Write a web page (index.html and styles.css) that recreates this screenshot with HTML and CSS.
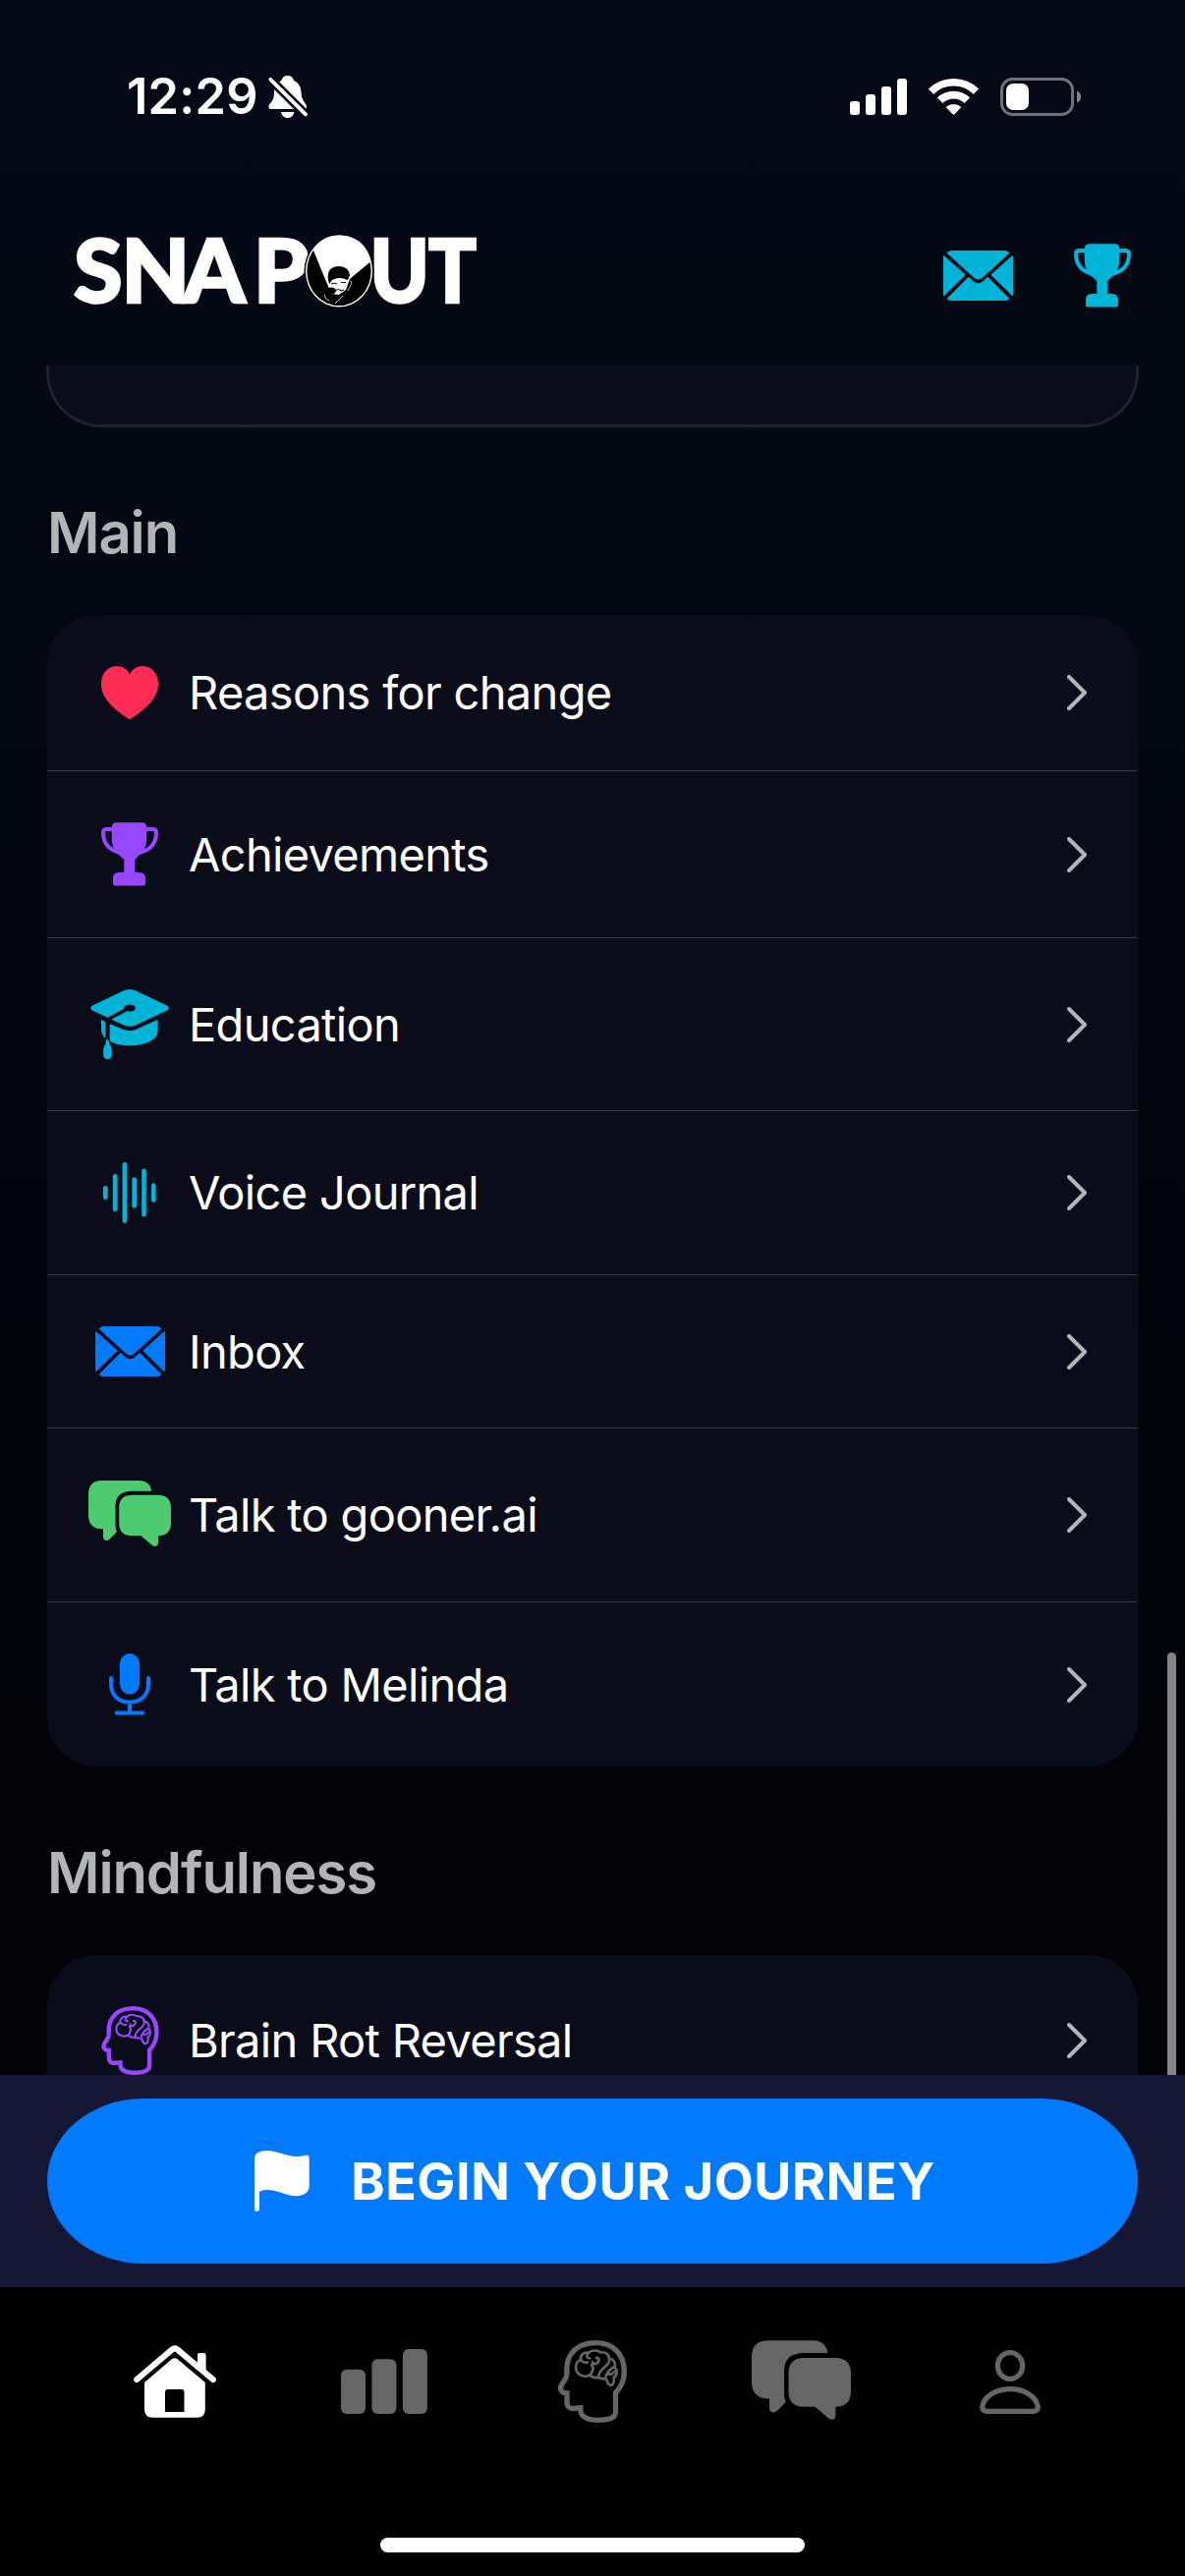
FILE: index.html
```html
<!DOCTYPE html>
<html lang="en">
<head>
<meta charset="utf-8">
<title>SnapOut</title>
<link rel="stylesheet" href="styles.css">
</head>
<body>
<svg class="sprite" aria-hidden="true">
  <symbol id="mail" viewBox="0 0 71 51">
    <path d="M3.5 2.5Q5.5 0 8 0H63Q65.500 0 67.500 2.500L40 27.500Q35.500 31.500 31 27.500ZM0 6Q0 4.500 1.500 5.800L22.700 24.700L1.500 45.500Q0 46.500 0 45ZM71 6Q71 4.500 69.500 5.800L48.300 24.700L69.500 45.500Q71 46.500 71 45ZM3.500 49L25.700 26.700L30.700 31.300Q35.500 35 40.300 31.300L45.300 26.700L67.500 49Q65.500 51 63 51H8Q5.500 51 3.500 49Z"/>
  </symbol>
  <symbol id="trophy" viewBox="0 0 58 65">
    <path d="M15.500 .3H41.500Q46.300 .5 46.300 5V15C46.300 29 40 32 34.300 38V51H39Q45 51.500 45 57V62Q45 64.500 43 64.500H14.500Q12 64.500 12 62V57Q12 51 18 51H23.300V38C17 32 10.700 29 10.700 15V5Q11 .5 15.500 .3Z"/>
    <path d="M12 7H5.500Q2 7 2 10.500C2 22 8 28.500 20 31M45 7H52.500Q56 7 56 10.500C56 22 50 28.500 38 31" fill="none" stroke="currentColor" stroke-width="4"/>
  </symbol>
  <symbol id="heart" viewBox="0 0 58 55">
    <path d="M29 54.500C12 43 0 33 0 18C0 7 7 0 16 0C22 0 27 3.500 29 8.500C31 3.500 36 0 42 0C51 0 58 7 58 18C58 33 46 43 29 54.500Z"/>
  </symbol>
  <symbol id="cap" viewBox="0 0 80 71">
    <path d="M34 1.300Q40 -1.200 46 1.300L78 16.500Q81.500 19 78 21.500L46 36.500Q40 39 34 36.500L2 21.500Q-1.500 19 2 16.500Z"/>
    <path class="cut" d="M39.500 19L17 31" fill="none" stroke-width="3.600"/>
    <ellipse class="cut-fill" cx="40" cy="19" rx="6" ry="3.500"/>
    <path d="M11 30.700L15.300 33V49.500Q11 46 11 41ZM19.600 35L34 41Q40 43 46 41L68.600 30.700V42C68.600 52 55 57.300 40 57.300C31 57.300 24 55.500 19.600 52.300ZM16 50L19.300 53V56Q21.800 58 21.800 61V67Q21.800 71 17.500 71Q13.200 71 13.200 67V61Q13.200 58 15.500 56Z"/>
  </symbol>
  <symbol id="wave" viewBox="0 0 54 62">
    <path d="M2.300 26.300V35.700M12.100 14.200V47.800M21.900 2.300V59.700M31.700 17.600V44.400M41.500 8.800V53.200M51.300 23.600V38.400" stroke="currentColor" stroke-width="4.600" stroke-linecap="round"/>
  </symbol>
  <symbol id="chat" viewBox="0 0 84 67">
    <path d="M13 0H52Q63 .5 64.300 10.700H43Q28 11.500 27.500 25V45Q27.500 50 29 52L21.500 59.800Q19 61.700 17 60.700Q15 60 15 57.500V49.300H13Q.5 48.500 0 36V13Q.5 .5 13 0Z"/>
    <path d="M43 14.700H72Q83.500 15.500 84 27V44Q83.500 55.500 72 56.200H71V64Q70.500 67 67.500 67Q66 66.700 65 66L53.600 56.200H43Q31.500 55.500 31.200 44V27Q31.500 15.500 43 14.700Z"/>
  </symbol>
  <symbol id="mic" viewBox="0 0 42 63">
    <rect x="11" y="0" width="20" height="41.500" rx="10"/>
    <path d="M2 25V31C2 43 10 49.500 21 49.500S40 43 40 31V25M21 50V60M7.700 60.500H34.300" fill="none" stroke="currentColor" stroke-width="4" stroke-linecap="round"/>
  </symbol>
  <symbol id="brain" viewBox="0 0 70 84">
    <g fill="none" stroke="currentColor" stroke-linejoin="round" stroke-linecap="round">
      <path stroke-width="5.300" stroke-linejoin="miter" d="M38.500 2.700C56 2.700 67.300 14 67.300 32C67.300 42 63 49 58.500 53.500V73C58.500 79 51 81.300 40.500 81.300C30 81.300 22.800 78 22.800 70.500V68.700L16 69.500C12 70 9 67.500 9 63V54C3.500 54 1.200 50 3.500 45.500C6 42 8.800 38 8.800 35V30C8.800 13 20 2.700 38.500 2.700Z"/>
      <path stroke-width="2.600" d="M23 20C22 15 27 11.500 31 13C34 9.500 41 10 43 12.500C48 11.500 52 14.500 52 18.500C57 19 59 24 57.500 27C61 31 60 36 56.500 38C57.500 42 56.500 46 53 45.700C50 45.500 50.500 41 48.500 39C45 40 43 38.500 41 38C37 38.500 34 37.500 32.500 35.500C25 39 18 34 18 27.500C18 23.500 20 21 23 20Z"/>
      <path stroke-width="2.600" d="M23 20C25 22.500 27 23.500 30 22.500M31 13C28 15.500 29 18 32 18.500M34 25C38 29 34 33 32.500 35.500M35 22C36 26 41 24 41.500 20C41.500 18 40 17.500 39 18M52 18.500C54 27 41 27 41 38M57.500 27C53 29 50 33 48.500 37M52 34.500C54 35 56 34 57 32"/>
    </g>
  </symbol>
  <symbol id="chevron" viewBox="0 0 20 36">
    <path d="M2 2L18 18L2 34" fill="none" stroke="currentColor" stroke-width="4" stroke-linecap="round" stroke-linejoin="round"/>
  </symbol>
</svg>

<div class="screen">
  <header class="top">
    <div class="status">
      <div class="status-left">
        <span class="time">12:29</span>
        <svg class="bell" viewBox="0 0 40 43">
          <path d="M19.700 0C23 0 25.500 2 26 5C31 7 33.500 12 33.500 17C34 24 36 26 38.500 29.500Q40.500 34 36 34H3.500Q-1 34 1 29.500C4 26 6 24 6 17C6 12 8.500 7 13.500 5C14 2 16.500 0 19.700 0ZM13 37H26.500Q25 43 19.700 43Q14.500 43 13 37Z"/>
          <path class="slash-gap" d="M0 1.500L40 41.500"/>
          <path class="slash" d="M2.300 3.800L38 39.300"/>
        </svg>
      </div>
      <div class="status-right">
        <svg class="signal" viewBox="0 0 58 37">
          <rect x="0" y="23" width="10" height="14" rx="3"/><rect x="16" y="16" width="10" height="21" rx="3"/><rect x="32" y="8" width="10" height="29" rx="3"/><rect x="48" y="0" width="10" height="37" rx="3"/>
        </svg>
        <svg class="wifi" viewBox="0 0 51 37">
          <path d="M2.500 13.200A32.700 32.700 0 0 1 48.500 13.200" fill="none" stroke="#fff" stroke-width="7.700"/>
          <path d="M11.700 22.300A19.700 19.700 0 0 1 39.300 22.300" fill="none" stroke="#fff" stroke-width="7.800"/>
          <path d="M17.700 29A11.500 11.500 0 0 1 33.300 29L26.500 36.300Q25.500 37.300 24.500 36.300Z"/>
        </svg>
        <svg class="battery" viewBox="0 0 82 39">
          <rect x="1.500" y="1.500" width="72" height="36" rx="11" fill="none" stroke="#6f717a" stroke-width="3"/>
          <rect x="6" y="6" width="23" height="27" rx="7"/>
          <path d="M78 13.500Q82 15 82 19.500T78 25.500Z" fill="#85868d"/>
        </svg>
      </div>
    </div>
    <div class="brandbar">
      <svg class="logo" viewBox="0 0 412 74">
        <text class="logo-text" y="69" x="0 48.500 111.500 183">SNAP</text>
        <text class="logo-text" y="69" x="335 401" transform="scale(.9 1)">UT</text>
        <ellipse cx="270" cy="37" rx="35.500" ry="38" fill="#050814"/>
        <ellipse cx="270" cy="37" rx="34" ry="36.500" fill="#fff"/>
        <ellipse cx="270" cy="37" rx="32.600" ry="35.100" fill="#000"/>
        <path d="M244 16L258 50L262 60L270 61L277 56L281 45L302.500 27C299 10 287 .5 270 .5C258 .5 249 6 244 16Z" fill="#fff"/>
        <path d="M259 46Q257 33 269 32Q280 32 281 41L279 46Q270 42 263 46L260 50Z" fill="#000"/>
        <ellipse cx="262" cy="57" rx="5" ry="3.500" fill="#000"/>
        <path d="M262 50Q265 48.500 268 50M272 48.500H277M266 57Q270 54 272 57L275 56" fill="none" stroke="#111" stroke-width="1.200"/>
        <path d="M255 61Q256 66 260 67M266 70L274 62M281 47Q284 47 282 51L279 57" fill="none" stroke="#bbb" stroke-width="1"/>
      </svg>
      <div class="actions">
        <svg class="i-mail cyan"><use href="#mail"/></svg>
        <svg class="i-trophy cyan"><use href="#trophy"/></svg>
      </div>
    </div>
  </header>

  <main class="scroll">
    <div class="panel-end"></div>
    <h2 class="heading first">Main</h2>
    <div class="card">
      <div class="row h158"><span class="slot"><svg class="i-heart red"><use href="#heart"/></svg></span><span class="label">Reasons for change</span><svg class="chev"><use href="#chevron"/></svg></div>
      <div class="row h169"><span class="slot"><svg class="i-trophy purple"><use href="#trophy"/></svg></span><span class="label">Achievements</span><svg class="chev"><use href="#chevron"/></svg></div>
      <div class="row h175"><span class="slot"><svg class="i-cap cyan"><use href="#cap"/></svg></span><span class="label">Education</span><svg class="chev"><use href="#chevron"/></svg></div>
      <div class="row h166"><span class="slot"><svg class="i-wave cyan"><use href="#wave"/></svg></span><span class="label">Voice Journal</span><svg class="chev"><use href="#chevron"/></svg></div>
      <div class="row h155"><span class="slot"><svg class="i-mail blue"><use href="#mail"/></svg></span><span class="label">Inbox</span><svg class="chev"><use href="#chevron"/></svg></div>
      <div class="row h176"><span class="slot"><svg class="i-chat green"><use href="#chat"/></svg></span><span class="label">Talk to gooner.ai</span><svg class="chev"><use href="#chevron"/></svg></div>
      <div class="row h167"><span class="slot"><svg class="i-mic blue"><use href="#mic"/></svg></span><span class="label">Talk to Melinda</span><svg class="chev"><use href="#chevron"/></svg></div>
    </div>
    <h2 class="heading">Mindfulness</h2>
    <div class="card">
      <div class="row h174"><span class="slot"><svg class="i-brain purple"><use href="#brain"/></svg></span><span class="label">Brain Rot Reversal</span><svg class="chev"><use href="#chevron"/></svg></div>
    </div>
    <div class="scrollbar"></div>
  </main>

  <div class="cta-bar">
    <button class="cta">
      <svg class="flag" viewBox="0 0 56 62"><path d="M0 7Q1 .3 12 0C24 0 32 6 43 6C48 6 50.500 5 53 4.500Q55.700 4.500 55.700 8V38Q54 45 44 46.200C32 46.500 24 40 13 40Q7 40 5 42V60Q4 62 2.500 62Q0 62 0 60Z"/></svg>
      <span class="cta-text">BEGIN YOUR JOURNEY</span>
    </button>
  </div>

  <nav class="tabs">
    <div class="tab-row">
      <span class="tab active"><svg class="t-home" viewBox="0 0 84 74"><path d="M65 22V10Q65 8 67 8H71.500Q73.600 8 73.600 10V28Z"/><path d="M3.200 35L39.500 4.200Q41.800 2.500 44.200 4.200L80.800 35" fill="none" stroke="currentColor" stroke-width="6.200" stroke-linecap="round"/><path fill-rule="evenodd" d="M38.500 14.500Q41.800 12 45 14.500L72.800 38V66Q72.500 73.500 65 73.800H19Q11.500 73.500 11 66V38ZM34.500 45Q32 45 32 47.500V68H51.500V47.500Q51.500 45 49 45Z"/></svg></span>
      <span class="tab"><svg class="t-bars" viewBox="0 0 88 66"><rect y="20.700" width="25" height="45.300" rx="6"/><rect x="31.400" y="10.300" width="25" height="55.700" rx="6"/><rect x="62.900" width="25" height="66" rx="6"/></svg></span>
      <span class="tab"><svg class="t-brain"><use href="#brain"/></svg></span>
      <span class="tab"><svg class="t-chat"><use href="#chat"/></svg></span>
      <span class="tab"><svg class="t-person" viewBox="0 0 62 65"><g fill="none" stroke="currentColor" stroke-width="5.200"><ellipse cx="31" cy="16" rx="12.700" ry="13.500"/><path d="M7.500 62.300Q2.700 62 2.700 58C4 47 17 39.700 31 39.700S58 47 59.300 58Q59.300 62 54.500 62.300Z"/></g></svg></span>
    </div>
    <div class="home-indicator"></div>
  </nav>
</div>
</body>
</html>
```

FILE: styles.css
```css
* { box-sizing: border-box; }
body { margin: 0; background: #000; font-family: Inter, "Liberation Sans", sans-serif; color: #fff; }
svg { display: block; fill: currentColor; flex: none; overflow: visible; }
.sprite { position: absolute; width: 0; height: 0; overflow: hidden; }

.screen {
  width: 1206px;
  height: 2622px;
  display: flex;
  flex-direction: column;
  overflow: hidden;
  background: linear-gradient(180deg, #050916 0, #040812 500px, #03060e 1100px, #030409 1700px, #030306 2112px);
}

.top { height: 372px; }
.status { display: flex; justify-content: space-between; align-items: center; height: 196px; padding: 0 106px 0 129px; }
.status-left { display: flex; align-items: center; gap: 12px; }
.time { font-size: 50.5px; line-height: 60px; font-weight: 600; width: 132px; letter-spacing: 0.2px; white-space: nowrap; }
.bell { width: 40px; height: 43px; }
.slash-gap { fill: none; stroke: #050814; stroke-width: 9px; }
.slash { fill: none; stroke: #fff; stroke-width: 3.8px; stroke-linecap: round; }
.status-right { display: flex; align-items: center; gap: 22px; }
.signal { width: 58px; height: 37px; }
.wifi { width: 51px; height: 37px; }
.battery { width: 82px; height: 39px; }

.brandbar { display: flex; justify-content: space-between; align-items: center; height: 160px; padding: 0 55px 0 75px; }
.logo { width: 412px; height: 74px; }
.logo-text { font-family: Lato, sans-serif; font-weight: 900; font-size: 90px; stroke: #fff; stroke-width: 2.6px; }
.actions { display: flex; align-items: center; gap: 62px; padding-top: 8px; }

.i-mail { width: 71px; height: 51px; }
.i-trophy { width: 58px; height: 65px; }
.i-heart { width: 58px; height: 55px; }
.i-cap { width: 80px; height: 71px; }
.i-wave { width: 54px; height: 62px; }
.i-chat { width: 84px; height: 67px; margin-top: -3px; }
.i-mic { width: 42px; height: 63px; }
.i-brain { width: 59px; height: 70px; }
.cyan { color: #00b4d8; }
.blue { color: #007aff; }
.red { color: #ff2d55; }
.purple { color: #9747ff; }
.green { color: #4ecb71; }
.cut { stroke: #0a0b19; stroke-linecap: round; }
.cut-fill { fill: #0a0b19; }

.scroll { position: relative; height: 1740px; overflow: hidden; padding: 0 48px; }
.panel-end { height: 63px; margin: 0 -1px; border: 3px solid #20212d; border-top: 0; border-radius: 0 0 56px 56px; background: #0a0b1b; }
.heading { margin: 72px 0 48px; padding-left: 0; font-size: 58px; line-height: 72px; font-weight: 600; color: #b3b4b7; letter-spacing: -1.1px; }
.heading.first { margin-top: 71px; }
.card { border-radius: 50px; background: #0a0c19; overflow: hidden; }
.row { display: flex; align-items: center; padding: 0 52px 0 42px; box-sizing: content-box; }
.row + .row { border-top: 1px solid #373944; }
.h155 { height: 155px; }
.h158 { height: 158px; }
.h166 { height: 166px; }
.h167 { height: 167px; }
.h169 { height: 169px; }
.h174 { height: 174px; }
.h175 { height: 175px; }
.h176 { height: 176px; }
.slot { display: flex; justify-content: center; width: 84px; }
.label { flex: 1; margin-left: 18px; font-size: 47px; line-height: 60px; font-weight: 400; letter-spacing: -0.68px; white-space: nowrap; }
.chev { width: 20px; height: 36px; color: #b4b5ba; }
.scrollbar { position: absolute; left: 1188px; top: 1310px; width: 9px; height: 460px; border-radius: 5px; background: #858587; }

.cta-bar { height: 216px; padding: 24px 48px; background: #151735; }
.cta { display: flex; align-items: center; justify-content: center; gap: 42px; width: 100%; height: 168px; border: 0; border-radius: 98px / 84px; background: #007aff; color: #fff; font-family: inherit; padding: 0 0 0 5px; }
.flag { width: 56px; height: 62px; }
.cta-text { font-size: 52px; line-height: 64px; padding-top: 1px; font-weight: 700; letter-spacing: 0.6px; white-space: nowrap; }

.tabs { height: 294px; background: #000; color: #666; display: flex; flex-direction: column; align-items: center; }
.tab-row { display: grid; grid-template-columns: repeat(5, 212.5px); height: 192px; width: 1062px; }
.tab { display: flex; align-items: center; justify-content: center; }
.tab.active { color: #fff; }
.t-home { width: 84px; height: 74px; }
.t-bars { width: 88px; height: 66px; }
.t-brain { width: 70px; height: 84px; }
.t-chat { width: 101px; height: 81px; margin-top: -4px; }
.t-person { width: 62px; height: 65px; }
.home-indicator { width: 432px; height: 15px; margin-top: 63px; border-radius: 8px; background: #fff; }
```
